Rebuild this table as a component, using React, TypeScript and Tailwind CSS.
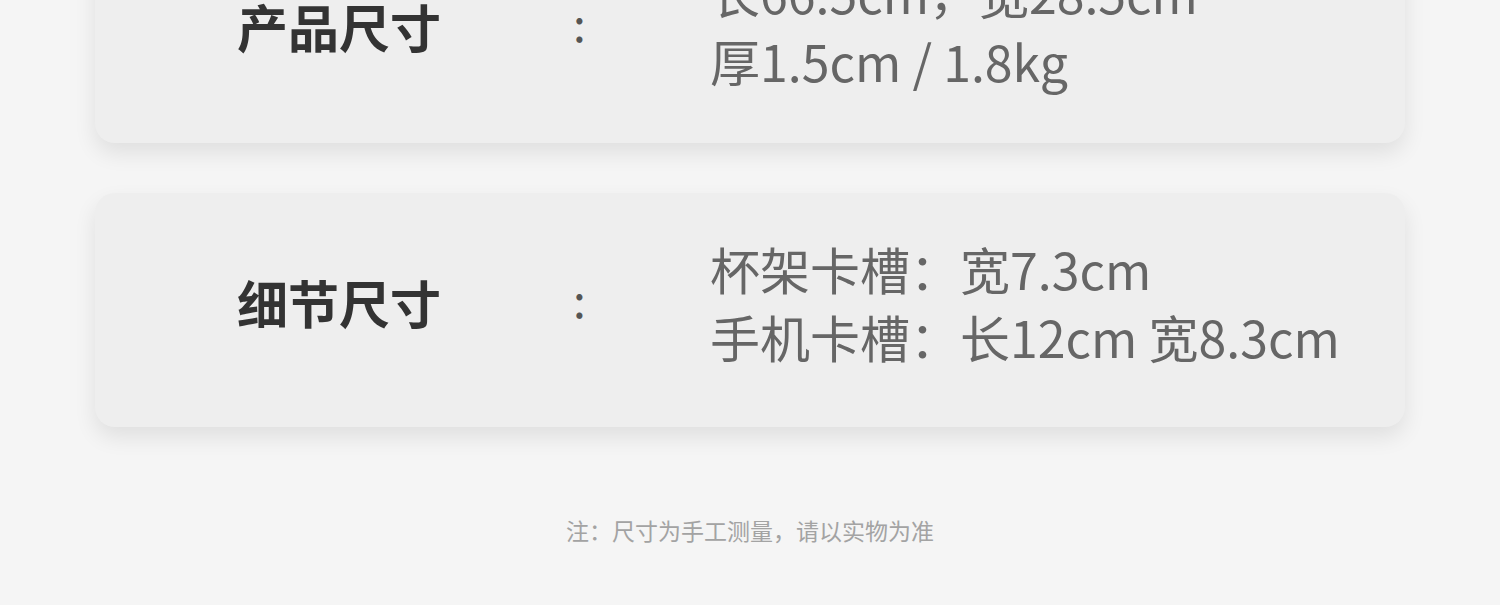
const rows = [
  {
    label: "产品尺寸",
    lines: ["长66.5cm，宽28.5cm", "厚1.5cm / 1.8kg"],
    lift: false,
  },
  {
    label: "细节尺寸",
    lines: ["杯架卡槽：宽7.3cm", "手机卡槽：长12cm 宽8.3cm"],
    lift: true,
  },
];

const SpecCard = ({ label, lines, lift }: { label: string; lines: string[]; lift: boolean }) => (
  <div
    className={
      lift
        ? "flex h-[234px] items-center rounded-[20px] bg-[#eeeeee] pb-[16px] pl-[142px] shadow-[0_10px_22px_rgba(0,0,0,0.09)]"
        : "flex h-[234px] items-center rounded-[20px] bg-[#eeeeee] pl-[142px] shadow-[0_10px_22px_rgba(0,0,0,0.09)]"
    }
  >
    <div className="w-[336px] text-[51px] font-bold leading-none text-[#333333]">{label}</div>
    <div className="w-[137px] -translate-y-[4px] text-[46px] leading-none text-[#555555]">:</div>
    <div className="flex flex-col text-[50px] leading-[68px] text-[#666666]">
      {lines.map((line) => (
        <span key={line}>{line}</span>
      ))}
    </div>
  </div>
);

export default function App() {
  return (
    <div
      className="h-[605px] overflow-hidden bg-[#f5f5f5]"
      style={{ fontFamily: '"Noto Sans CJK SC", "Noto Sans", sans-serif' }}
    >
      <div className="-mt-[91px] flex flex-col gap-[50px] px-[95px]">
        {rows.map((row) => (
          <SpecCard key={row.label} label={row.label} lines={row.lines} lift={row.lift} />
        ))}
      </div>
      <p className="mt-[92px] text-center text-[23px] leading-none text-[#a3a3a3]">
        注：尺寸为手工测量，请以实物为准
      </p>
    </div>
  );
}
